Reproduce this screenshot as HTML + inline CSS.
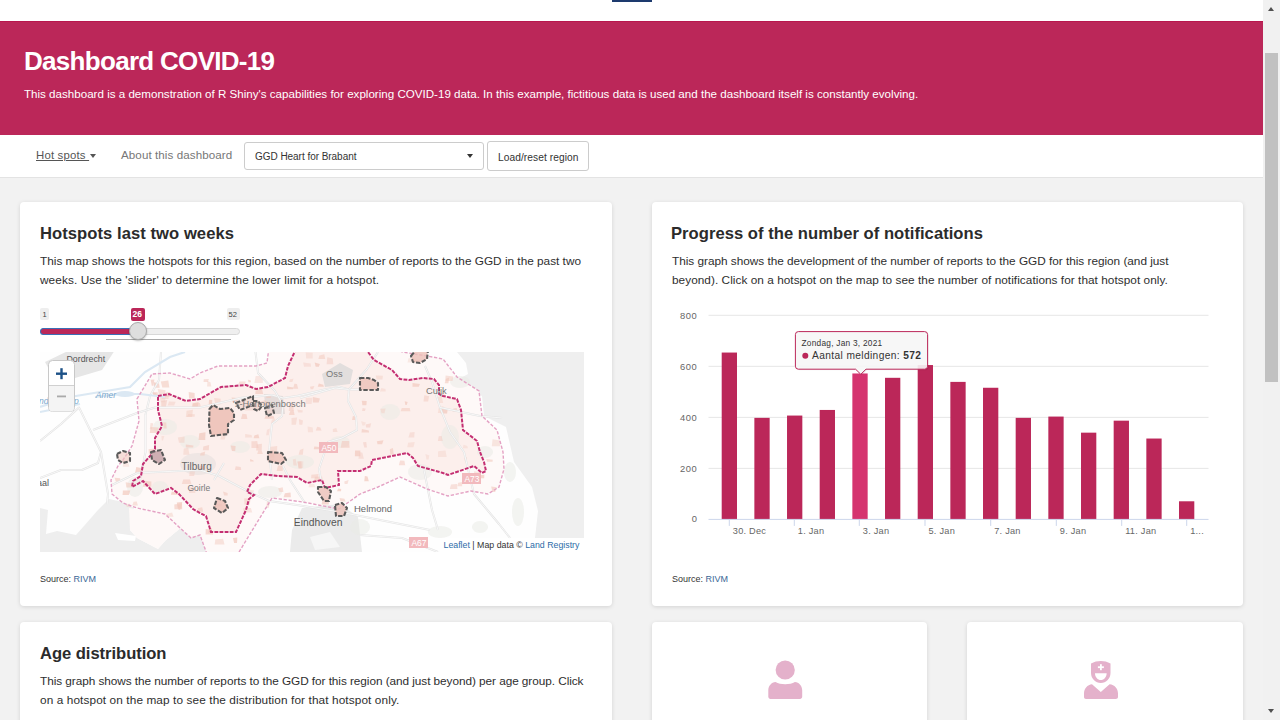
<!DOCTYPE html>
<html><head><meta charset="utf-8">
<style>
*{box-sizing:border-box;margin:0;padding:0}
html,body{width:1280px;height:720px;overflow:hidden}
body{background:#f2f2f2;font-family:"Liberation Sans",sans-serif;position:relative;color:#333}
.abs{position:absolute}
.t{position:absolute;white-space:nowrap;line-height:1}
#topstrip{left:0;top:0;width:1263px;height:21px;background:#fff}
#topbar{left:612px;top:0;width:40px;height:2px;background:#1d3a6e}
#banner{left:0;top:21px;width:1263px;height:114px;background:#bb2759;border-top:1px solid #b8164d}
#nav{left:0;top:135px;width:1263px;height:43px;background:#fff;border-bottom:1px solid #e3e3e3}
.card{position:absolute;background:#fff;border-radius:4px;box-shadow:0 1px 4px rgba(0,0,0,0.13)}
.h2{font-size:16.6px;margin-top:1.5px;font-weight:bold;color:#2b2b2b}
.desc{font-size:11.8px;color:#2e2e2e;margin-top:0.9px}
.src{font-size:9px;color:#333;margin-top:1.3px}
.src span{color:#3a6796}
#scroll{left:1263px;top:0;width:17px;height:720px;background:#f1f1f1}
#thumb{left:1265px;top:53px;width:13px;height:329px;background:#c1c1c1}
</style></head><body>
<div id="topstrip" class="abs"></div>
<div id="topbar" class="abs"></div>
<div id="banner" class="abs"></div>
<div id="title" class="t" style="left:24px;top:48px;font-size:26px;font-weight:bold;color:#fff;letter-spacing:-0.7px">Dashboard COVID-19</div>
<div id="sub" class="t" style="left:24px;top:88px;font-size:11.6px;color:#fff">This dashboard is a demonstration of R Shiny's capabilities for exploring COVID-19 data. In this example, fictitious data is used and the dashboard itself is constantly evolving.</div>

<div id="nav" class="abs"></div>
<div id="hot" class="t" style="left:36px;top:149.9px;font-size:11.4px;letter-spacing:0.18px;color:#555;text-decoration:underline">Hot spots&nbsp;</div>
<div class="abs" style="left:89.8px;top:153.7px;width:0;height:0;border-left:3.7px solid transparent;border-right:3.7px solid transparent;border-top:4.2px solid #555"></div>
<div id="about" class="t" style="left:121px;top:148.5px;font-size:11.6px;color:#777;letter-spacing:0.084px">About this dashboard</div>
<div class="abs" style="left:244px;top:142px;width:240px;height:28px;border:1px solid #ccc;border-radius:3px;background:#fff"></div>
<div id="sel" class="t" style="left:255px;top:152px;font-size:10px;color:#333;letter-spacing:-0.04px">GGD Heart for Brabant</div>
<div class="abs" style="left:467px;top:154.3px;width:0;height:0;border-left:3.7px solid transparent;border-right:3.7px solid transparent;border-top:4px solid #333"></div>
<div class="abs" style="left:487px;top:141px;width:102px;height:30px;border:1px solid #ccc;border-radius:3px;background:#fff"></div>
<div id="btn" class="t" style="left:498px;top:153px;font-size:10.2px;color:#333;letter-spacing:0.075px">Load/reset region</div>

<!-- cards -->
<div class="card" style="left:20px;top:202px;width:592px;height:404px"></div>
<div class="card" style="left:652px;top:202px;width:591px;height:404px"></div>
<div class="card" style="left:20px;top:622px;width:592px;height:200px"></div>
<div class="card" style="left:652px;top:622px;width:275px;height:200px"></div>
<div class="card" style="left:967px;top:622px;width:276px;height:200px"></div>

<div id="h2a" class="t h2" style="left:40px;top:224px;letter-spacing:0.055px">Hotspots last two weeks</div>
<div id="d1" class="t desc" style="left:40px;top:255px">This map shows the hotspots for this region, based on the number of reports to the GGD in the past two</div>
<div id="d2" class="t desc" style="left:40px;top:274px;letter-spacing:0.092px">weeks. Use the 'slider' to determine the lower limit for a hotspot.</div>
<div class="t src" style="left:40px;top:574px">Source: <span>RIVM</span></div>

<div id="h2b" class="t h2" style="left:671px;top:224px;letter-spacing:0.032px">Progress of the number of notifications</div>
<div id="d3" class="t desc" style="left:672px;top:255px;letter-spacing:-0.02px">This graph shows the development of the number of reports to the GGD for this region (and just</div>
<div id="d4" class="t desc" style="left:672px;top:274px;letter-spacing:0.044px">beyond). Click on a hotspot on the map to see the number of notifications for that hotspot only.</div>
<div class="t src" style="left:672px;top:574px">Source: <span>RIVM</span></div>

<div id="h2c" class="t h2" style="left:40px;top:644px;letter-spacing:-0.047px">Age distribution</div>
<div id="d5" class="t desc" style="left:40px;top:675px;letter-spacing:-0.058px">This graph shows the number of reports to the GGD for this region (and just beyond) per age group. Click</div>
<div id="d6" class="t desc" style="left:40px;top:694px;letter-spacing:0.107px">on a hotspot on the map to see the distribution for that hotspot only.</div>

<!--SLIDER-->
<div class="abs" style="left:40px;top:308px;width:9px;height:12px;background:#eee;border-radius:2px"></div>
<div class="t" style="left:42.5px;top:310.5px;font-size:7.5px;color:#444">1</div>
<div class="abs" style="left:131px;top:308px;width:14px;height:13px;background:#bb2759;border-radius:2px"></div>
<div class="t" style="left:132.5px;top:310px;font-size:8.5px;color:#fff;font-weight:bold">26</div>
<div class="abs" style="left:227px;top:308px;width:13px;height:12px;background:#eee;border-radius:2px"></div>
<div class="t" style="left:228.5px;top:310.5px;font-size:7.5px;color:#444">52</div>
<div class="abs" style="left:40px;top:328px;width:200px;height:7px;background:#efefef;border:1px solid #d8d8d8;border-radius:4px"></div>
<div class="abs" style="left:40px;top:328px;width:99px;height:7px;background:#bb2759;border:1px solid #3b6fb6;border-right:none;border-radius:4px 0 0 4px"></div>
<div class="abs" style="left:106px;top:339px;width:125px;height:1px;background:#aaa"></div>
<div class="abs" style="left:129px;top:321.8px;width:18px;height:18px;background:#dedede;border:1px solid #aaa;border-radius:50%;box-shadow:0 1px 2px rgba(0,0,0,0.25)"></div>

<!--MAP-->
<svg class="abs" style="left:40px;top:352px" width="544" height="200" viewBox="0 0 544 200">
<rect width="544" height="200" fill="#fefefe"/>
<path d="M417,0 L426,11 L428,22 L417,28 L420,33 L442,44 L444,64 L466,75 L474,110 L492,135 L498,159 L495,186 L544,186 L544,0 Z" fill="#efefef"/>
<path d="M0,156 L8,158 L6,182 L17,179 L36,183 L44,174 L58,158 L69,147 L83,150 L94,156 L90,178 L97,186 L118,197 L125,189 L143,174 L143,161 L160,161 L166,164 L171,180 L168,200 L0,200 Z" fill="#eeeeee"/>
<path d="M75,181 L96,184 L95,189 L78,188 Z" fill="#fff"/>
<polygon points="97,47 112,22 130,21 150,27 160,21 178,14 216,14 227,11 229,-5 362,-5 362,0 387,4 403,7 417,25 439,39 442,64 457,78 463,100 464,117 459,135 448,142 431,139 408,144 387,137 360,125 338,135 320,142 299,157 263,150 232,146 196,205 168,205 160,183 151,186 139,175 125,162 97,156 83,151 72,142 71,128 78,114 83,108 92,94 99,69" fill="#fef9f8"/>
<path d="M89,156 L144,164 L143,174 L125,189 L118,197 L97,186 L90,178 Z" fill="#fef9f8"/>
<polygon points="118,44 129,42 146,49 160,47 181,35 206,33 216,37 228,35 245,26 248,14 257,-5 328,-5 328,0 334,8 352,18 360,27 369,28 383,26 394,27 399,33 399,42 403,44 417,47 421,58 423,78 437,89 440,100 444,110 446,119 442,121 434,114 408,123 403,121 378,114 373,106 367,101 332,108 331,114 320,119 298,119 299,133 285,136 282,128 267,131 257,125 238,124 221,122 210,133 207,140 214,143 209,147 206,158 196,180 171,180 166,164 160,161 153,157 139,142 131,136 115,142 103,129 92,135 93,129 101,124 103,112 111,103 115,97 115,86 122,74 118,58" fill="#fcefec"/>
<path d="M5,10 L30,-2 L75,-2 L62,18 L35,26 L15,28 Z" fill="#e6e6e6"/>
<path d="M282,22 L300,11 L313,18 L310,32 L285,35 Z" fill="#e2dedd"/>
<path d="M262,156 L300,152 L318,165 L322,200 L250,200 L252,178 Z" fill="#ebebeb"/><path d="M270,185 L290,180 L300,195 L275,198 Z" fill="#f6f6f6"/>
<path d="M224,42 L243,44 L245,62 L226,62 Z" fill="#e6dddb"/>
<ellipse cx="158" cy="112" rx="18" ry="11" fill="#efe6e4"/>
<ellipse cx="125" cy="75" rx="12" ry="8" fill="#e9ebe6" fill-opacity="0.55"/>
<ellipse cx="150" cy="90" rx="10" ry="7" fill="#e9ebe6" fill-opacity="0.55"/>
<ellipse cx="95" cy="135" rx="8" ry="10" fill="#e9ebe6" fill-opacity="0.55"/>
<ellipse cx="260" cy="110" rx="14" ry="7" fill="#e9ebe6" fill-opacity="0.55"/>
<ellipse cx="350" cy="60" rx="10" ry="8" fill="#e9ebe6" fill-opacity="0.55"/>
<ellipse cx="380" cy="120" rx="12" ry="8" fill="#e9ebe6" fill-opacity="0.55"/>
<ellipse cx="410" cy="85" rx="9" ry="12" fill="#e9ebe6" fill-opacity="0.55"/>
<ellipse cx="440" cy="175" rx="8" ry="6" fill="#e9ebe6" fill-opacity="0.55"/>
<ellipse cx="478" cy="160" rx="6" ry="14" fill="#e9ebe6" fill-opacity="0.55"/>
<ellipse cx="470" cy="120" rx="6" ry="10" fill="#e9ebe6" fill-opacity="0.55"/>
<ellipse cx="445" cy="100" rx="8" ry="6" fill="#e9ebe6" fill-opacity="0.55"/>
<ellipse cx="420" cy="30" rx="10" ry="6" fill="#e9ebe6" fill-opacity="0.55"/>
<ellipse cx="230" cy="140" rx="12" ry="6" fill="#e9ebe6" fill-opacity="0.55"/>
<ellipse cx="320" cy="175" rx="10" ry="8" fill="#e9ebe6" fill-opacity="0.55"/>
<ellipse cx="120" cy="135" rx="8" ry="6" fill="#e9ebe6" fill-opacity="0.55"/>
<ellipse cx="400" cy="180" rx="12" ry="6" fill="#e9ebe6" fill-opacity="0.55"/>
<ellipse cx="200" cy="95" rx="10" ry="6" fill="#e9ebe6" fill-opacity="0.55"/>
<ellipse cx="300" cy="90" rx="10" ry="6" fill="#e9ebe6" fill-opacity="0.55"/>
<polygon points="199.5,29.4 205.6,29.5 205.2,32.2 198.2,32.2" fill="#f2cabf" fill-opacity="0.55"/>
<polygon points="119.5,43.5 125.5,43.8 125.2,50.3 120.9,50.3" fill="#f2cabf" fill-opacity="0.37"/>
<polygon points="413.4,56.5 416.7,55.9 417.6,59.5 412.4,59.5" fill="#f2cabf" fill-opacity="0.58"/>
<polygon points="325.6,72.6 331.1,71.3 330.2,75.4 326.1,75.4" fill="#f2cabf" fill-opacity="0.52"/>
<polygon points="195.7,114.2 200.7,115.1 201.2,118.0 194.9,118.0" fill="#f2cabf" fill-opacity="0.58"/>
<polygon points="361.8,56.1 369.7,55.9 370.4,59.2 360.7,59.2" fill="#f2cabf" fill-opacity="0.55"/>
<polygon points="85.7,130.3 92.4,131.4 91.8,135.4 86.3,135.4" fill="#f2cabf" fill-opacity="0.59"/>
<polygon points="302.0,89.0 309.1,88.9 309.6,95.7 300.6,95.7" fill="#f2cabf" fill-opacity="0.63"/>
<polygon points="398.8,55.5 403.4,54.1 403.3,61.0 397.8,61.0" fill="#f2cabf" fill-opacity="0.40"/>
<polygon points="93.6,149.8 96.8,149.5 97.9,153.4 92.3,153.4" fill="#f2cabf" fill-opacity="0.53"/>
<polygon points="181.4,81.0 185.8,82.4 184.8,87.5 180.4,87.5" fill="#f2cabf" fill-opacity="0.44"/>
<polygon points="163.3,94.6 169.1,93.1 168.8,98.3 162.9,98.3" fill="#f2cabf" fill-opacity="0.58"/>
<polygon points="451.2,134.6 456.6,135.2 455.2,139.9 452.4,139.9" fill="#f2cabf" fill-opacity="0.66"/>
<polygon points="227.0,77.8 230.0,76.5 228.7,83.2 226.1,83.2" fill="#f2cabf" fill-opacity="0.41"/>
<polygon points="110.6,70.9 113.2,71.2 112.2,77.3 109.8,77.3" fill="#f2cabf" fill-opacity="0.49"/>
<polygon points="215.7,24.0 222.8,23.9 222.8,30.9 214.4,30.9" fill="#f2cabf" fill-opacity="0.39"/>
<polygon points="207.1,51.6 214.1,50.2 215.5,54.9 207.1,54.9" fill="#f2cabf" fill-opacity="0.41"/>
<polygon points="287.3,5.3 292.7,6.4 293.3,12.2 286.6,12.2" fill="#f2cabf" fill-opacity="0.50"/>
<polygon points="136.8,150.5 142.2,150.0 141.4,156.5 137.8,156.5" fill="#f2cabf" fill-opacity="0.74"/>
<polygon points="160.7,100.9 165.2,99.5 164.5,103.6 160.0,103.6" fill="#f2cabf" fill-opacity="0.63"/>
<polygon points="452.6,87.2 460.3,88.6 459.9,94.2 451.8,94.2" fill="#f2cabf" fill-opacity="0.44"/>
<polygon points="148.7,39.9 154.6,40.9 154.6,46.4 149.1,46.4" fill="#f2cabf" fill-opacity="0.67"/>
<polygon points="103.9,128.8 111.4,129.6 111.3,134.8 102.9,134.8" fill="#f2cabf" fill-opacity="0.67"/>
<polygon points="203.0,156.2 210.9,155.9 212.2,160.4 203.7,160.4" fill="#f2cabf" fill-opacity="0.42"/>
<polygon points="120.8,29.5 128.3,28.4 129.3,35.6 122.3,35.6" fill="#f2cabf" fill-opacity="0.61"/>
<polygon points="210.2,107.0 213.4,108.4 213.8,109.6 210.2,109.6" fill="#f2cabf" fill-opacity="0.72"/>
<polygon points="400.5,41.2 404.3,40.4 404.6,45.0 399.7,45.0" fill="#f2cabf" fill-opacity="0.52"/>
<polygon points="211.5,89.3 217.2,89.1 218.5,95.9 211.5,95.9" fill="#f2cabf" fill-opacity="0.56"/>
<polygon points="279.4,3.6 284.3,2.2 285.2,7.0 278.4,7.0" fill="#f2cabf" fill-opacity="0.54"/>
<polygon points="360.1,108.5 364.4,108.7 365.2,113.3 358.9,113.3" fill="#f2cabf" fill-opacity="0.57"/>
<polygon points="169.4,54.0 176.1,54.2 176.9,58.8 170.6,58.8" fill="#f2cabf" fill-opacity="0.53"/>
<polygon points="315.0,98.6 320.3,98.4 320.4,104.2 314.9,104.2" fill="#f2cabf" fill-opacity="0.73"/>
<polygon points="406.0,26.7 409.2,25.5 408.4,31.2 404.7,31.2" fill="#f2cabf" fill-opacity="0.62"/>
<polygon points="131.8,139.6 137.9,140.8 139.3,142.8 130.9,142.8" fill="#f2cabf" fill-opacity="0.73"/>
<polygon points="229.3,95.0 237.2,94.0 237.0,101.3 229.3,101.3" fill="#f2cabf" fill-opacity="0.49"/>
<polygon points="148.3,62.1 154.8,62.3 154.6,64.7 146.9,64.7" fill="#f2cabf" fill-opacity="0.48"/>
<polygon points="319.6,99.9 322.4,100.8 323.8,106.8 318.4,106.8" fill="#f2cabf" fill-opacity="0.46"/>
<polygon points="85.8,151.9 89.8,151.7 91.1,155.0 86.8,155.0" fill="#f2cabf" fill-opacity="0.45"/>
<polygon points="298.2,136.6 301.2,137.1 301.0,139.3 297.0,139.3" fill="#f2cabf" fill-opacity="0.73"/>
<polygon points="251.5,66.1 257.1,65.4 255.9,72.8 251.6,72.8" fill="#f2cabf" fill-opacity="0.45"/>
<polygon points="113.8,31.5 116.6,30.9 116.0,34.9 114.6,34.9" fill="#f2cabf" fill-opacity="0.47"/>
<polygon points="270.0,34.7 274.4,33.9 273.0,37.3 270.7,37.3" fill="#f2cabf" fill-opacity="0.57"/>
<polygon points="145.8,92.6 153.4,93.5 153.2,95.6 145.8,95.6" fill="#f2cabf" fill-opacity="0.68"/>
<polygon points="227.2,98.8 233.5,98.3 234.5,105.7 227.9,105.7" fill="#f2cabf" fill-opacity="0.60"/>
<polygon points="231.9,67.8 234.7,66.5 235.4,70.9 231.1,70.9" fill="#f2cabf" fill-opacity="0.42"/>
<polygon points="418.2,130.8 422.3,130.1 422.1,134.3 417.2,134.3" fill="#f2cabf" fill-opacity="0.53"/>
<polygon points="175.3,187.5 183.1,186.8 184.5,192.5 174.7,192.5" fill="#f2cabf" fill-opacity="0.49"/>
<polygon points="259.9,98.0 263.5,96.6 262.8,102.8 258.6,102.8" fill="#f2cabf" fill-opacity="0.51"/>
<polygon points="191.7,45.4 197.4,46.1 197.9,50.3 192.3,50.3" fill="#f2cabf" fill-opacity="0.70"/>
<polygon points="225.8,63.6 233.7,64.3 234.2,66.8 224.4,66.8" fill="#f2cabf" fill-opacity="0.68"/>
<polygon points="426.8,122.3 433.3,121.2 433.4,128.5 426.8,128.5" fill="#f2cabf" fill-opacity="0.68"/>
<polygon points="123.2,70.3 126.3,70.5 126.7,76.6 123.6,76.6" fill="#f2cabf" fill-opacity="0.62"/>
<polygon points="265.7,0.6 272.6,0.7 272.7,6.5 266.2,6.5" fill="#f2cabf" fill-opacity="0.38"/>
<polygon points="364.7,49.2 367.6,49.9 366.7,52.9 365.4,52.9" fill="#f2cabf" fill-opacity="0.74"/>
<polygon points="267.6,74.6 272.7,75.4 273.1,80.2 268.0,80.2" fill="#f2cabf" fill-opacity="0.38"/>
<polygon points="129.0,49.5 135.6,49.7 134.1,53.4 127.7,53.4" fill="#f2cabf" fill-opacity="0.46"/>
<polygon points="340.3,56.7 345.6,56.6 344.5,61.3 341.5,61.3" fill="#f2cabf" fill-opacity="0.43"/>
<polygon points="249.8,52.4 253.4,51.5 253.7,59.1 248.7,59.1" fill="#f2cabf" fill-opacity="0.56"/>
<polygon points="398.1,99.2 405.5,98.4 406.7,104.9 398.0,104.9" fill="#f2cabf" fill-opacity="0.36"/>
<polygon points="250.3,58.9 253.6,58.3 254.6,62.9 248.8,62.9" fill="#f2cabf" fill-opacity="0.65"/>
<polygon points="405.6,23.4 413.2,24.6 412.6,29.1 405.3,29.1" fill="#f2cabf" fill-opacity="0.51"/>
<polygon points="214.3,83.5 218.3,82.3 219.3,86.2 213.6,86.2" fill="#f2cabf" fill-opacity="0.72"/>
<polygon points="169.7,51.8 175.0,51.4 176.4,55.2 170.9,55.2" fill="#f2cabf" fill-opacity="0.67"/>
<polygon points="446.3,107.1 452.7,107.8 452.6,109.8 447.0,109.8" fill="#f2cabf" fill-opacity="0.61"/>
<polygon points="258.9,67.0 263.0,68.4 262.3,72.8 259.3,72.8" fill="#f2cabf" fill-opacity="0.47"/>
<polygon points="292.9,76.9 296.3,76.0 297.6,80.1 292.9,80.1" fill="#f2cabf" fill-opacity="0.44"/>
<polygon points="250.0,27.2 253.5,26.7 252.3,30.1 249.2,30.1" fill="#f2cabf" fill-opacity="0.45"/>
<polygon points="369.9,80.5 374.6,80.1 374.2,85.4 368.5,85.4" fill="#f2cabf" fill-opacity="0.46"/>
<polygon points="271.4,122.8 278.6,122.1 277.8,126.2 271.1,126.2" fill="#f2cabf" fill-opacity="0.53"/>
<polygon points="82.9,138.4 90.3,138.6 88.8,143.0 82.6,143.0" fill="#f2cabf" fill-opacity="0.72"/>
<polygon points="113.6,30.1 119.0,31.4 119.7,35.7 114.1,35.7" fill="#f2cabf" fill-opacity="0.66"/>
<polygon points="252.9,107.5 255.6,106.7 256.9,113.6 253.4,113.6" fill="#f2cabf" fill-opacity="0.47"/>
<polygon points="121.2,49.1 127.2,47.9 125.9,54.7 121.3,54.7" fill="#f2cabf" fill-opacity="0.58"/>
<polygon points="225.2,43.6 231.0,43.0 230.9,46.1 226.6,46.1" fill="#f2cabf" fill-opacity="0.61"/>
<polygon points="423.5,92.7 427.3,94.1 427.9,96.3 422.9,96.3" fill="#f2cabf" fill-opacity="0.36"/>
<polygon points="269.3,131.5 274.1,132.0 275.4,135.2 268.5,135.2" fill="#f2cabf" fill-opacity="0.36"/>
<polygon points="205.2,82.0 211.5,82.9 212.2,85.4 205.2,85.4" fill="#f2cabf" fill-opacity="0.43"/>
<polygon points="398.0,45.0 401.7,44.4 403.1,50.9 398.0,50.9" fill="#f2cabf" fill-opacity="0.42"/>
<polygon points="159.3,81.3 165.5,80.3 165.2,88.1 158.5,88.1" fill="#f2cabf" fill-opacity="0.74"/>
<polygon points="368.5,6.2 374.7,5.8 374.2,10.4 367.5,10.4" fill="#f2cabf" fill-opacity="0.35"/>
<polygon points="181.9,68.5 189.7,69.9 188.8,71.6 181.5,71.6" fill="#f2cabf" fill-opacity="0.68"/>
<polygon points="398.8,84.3 401.6,83.9 402.8,89.0 397.9,89.0" fill="#f2cabf" fill-opacity="0.50"/>
<polygon points="376.7,7.9 379.4,9.2 378.6,10.7 377.4,10.7" fill="#f2cabf" fill-opacity="0.71"/>
<polygon points="205.6,53.1 213.4,52.4 214.0,58.4 205.1,58.4" fill="#f2cabf" fill-opacity="0.46"/>
<polygon points="436.6,123.6 444.3,122.8 444.2,126.2 438.0,126.2" fill="#f2cabf" fill-opacity="0.73"/>
<polygon points="224.6,49.0 229.5,50.2 228.5,53.7 225.5,53.7" fill="#f2cabf" fill-opacity="0.65"/>
<polygon points="312.9,63.9 317.2,64.8 315.9,68.0 312.0,68.0" fill="#f2cabf" fill-opacity="0.65"/>
<polygon points="83.5,107.8 87.8,108.9 89.3,114.7 82.8,114.7" fill="#f2cabf" fill-opacity="0.38"/>
<polygon points="108.6,97.2 115.0,96.4 114.7,101.7 108.9,101.7" fill="#f2cabf" fill-opacity="0.62"/>
<polygon points="335.8,23.6 342.9,23.8 342.5,27.4 336.5,27.4" fill="#f2cabf" fill-opacity="0.43"/>
<polygon points="169.0,47.8 172.3,48.1 171.8,54.3 168.7,54.3" fill="#f2cabf" fill-opacity="0.75"/>
<polygon points="272.9,45.1 279.9,46.6 278.7,50.6 272.9,50.6" fill="#f2cabf" fill-opacity="0.68"/>
<polygon points="117.7,37.0 125.5,38.3 125.2,42.1 118.8,42.1" fill="#f2cabf" fill-opacity="0.53"/>
<polygon points="174.0,151.7 181.7,152.0 182.0,154.6 173.1,154.6" fill="#f2cabf" fill-opacity="0.50"/>
<polygon points="126.5,39.8 130.4,40.2 129.6,45.0 125.1,45.0" fill="#f2cabf" fill-opacity="0.48"/>
<polygon points="341.3,36.1 345.5,37.0 345.7,39.5 340.0,39.5" fill="#f2cabf" fill-opacity="0.39"/>
<polygon points="228.1,107.3 234.1,106.3 234.7,110.2 227.8,110.2" fill="#f2cabf" fill-opacity="0.46"/>
<polygon points="193.0,185.9 197.3,185.4 197.0,190.9 194.1,190.9" fill="#f2cabf" fill-opacity="0.75"/>
<polygon points="215.5,38.5 222.0,37.0 223.2,41.9 215.3,41.9" fill="#f2cabf" fill-opacity="0.68"/>
<polygon points="254.4,31.7 256.9,32.1 258.2,36.7 253.1,36.7" fill="#f2cabf" fill-opacity="0.60"/>
<polygon points="218.3,98.4 221.6,98.4 222.9,102.1 217.2,102.1" fill="#f2cabf" fill-opacity="0.55"/>
<polygon points="263.1,10.4 270.7,11.6 271.0,14.7 264.1,14.7" fill="#f2cabf" fill-opacity="0.41"/>
<polygon points="384.3,43.3 389.1,44.3 388.1,49.6 383.5,49.6" fill="#f2cabf" fill-opacity="0.51"/>
<polygon points="277.2,74.8 280.3,75.5 281.5,78.4 275.8,78.4" fill="#f2cabf" fill-opacity="0.57"/>
<polygon points="373.0,7.4 380.1,7.7 380.2,10.5 373.4,10.5" fill="#f2cabf" fill-opacity="0.47"/>
<polygon points="238.0,113.6 242.9,113.5 242.7,119.1 236.6,119.1" fill="#f2cabf" fill-opacity="0.60"/>
<polygon points="265.8,45.9 272.5,45.7 271.5,51.9 265.7,51.9" fill="#f2cabf" fill-opacity="0.39"/>
<polygon points="121.4,84.0 124.4,84.0 123.0,88.5 121.8,88.5" fill="#f2cabf" fill-opacity="0.38"/>
<polygon points="274.6,10.6 279.9,11.9 278.8,14.8 275.7,14.8" fill="#f2cabf" fill-opacity="0.75"/>
<polygon points="372.5,31.0 379.9,31.9 378.8,34.7 372.5,34.7" fill="#f2cabf" fill-opacity="0.72"/>
<polygon points="153.3,51.3 158.6,49.9 157.7,55.2 152.3,55.2" fill="#f2cabf" fill-opacity="0.72"/>
<polygon points="137.5,153.0 140.6,153.5 140.2,157.9 138.6,157.9" fill="#f2cabf" fill-opacity="0.57"/>
<polygon points="321.9,76.9 328.8,78.4 329.0,80.6 321.5,80.6" fill="#f2cabf" fill-opacity="0.66"/>
<polygon points="246.9,34.5 253.5,35.4 252.8,37.2 247.3,37.2" fill="#f2cabf" fill-opacity="0.74"/>
<polygon points="304.3,129.4 308.6,128.0 307.5,131.9 304.7,131.9" fill="#f2cabf" fill-opacity="0.52"/>
<polygon points="122.8,44.3 128.9,42.8 128.5,46.9 121.6,46.9" fill="#f2cabf" fill-opacity="0.49"/>
<polygon points="159.7,113.8 165.4,114.2 165.4,117.2 158.6,117.2" fill="#f2cabf" fill-opacity="0.72"/>
<polygon points="167.4,29.1 170.5,30.2 171.3,34.5 167.1,34.5" fill="#f2cabf" fill-opacity="0.46"/>
<polygon points="74.6,125.8 80.2,126.2 80.0,129.8 75.9,129.8" fill="#f2cabf" fill-opacity="0.64"/>
<polygon points="169.4,176.2 172.1,175.9 171.4,181.1 168.1,181.1" fill="#f2cabf" fill-opacity="0.66"/>
<polygon points="149.8,118.6 155.1,119.5 154.1,124.0 149.2,124.0" fill="#f2cabf" fill-opacity="0.47"/>
<polygon points="368.1,90.7 374.7,89.9 373.5,95.3 367.3,95.3" fill="#f2cabf" fill-opacity="0.37"/>
<polygon points="204.2,146.2 210.5,146.8 209.8,152.5 204.4,152.5" fill="#f2cabf" fill-opacity="0.52"/>
<polygon points="385.4,102.0 389.3,103.4 388.5,107.4 386.5,107.4" fill="#f2cabf" fill-opacity="0.36"/>
<polygon points="174.1,46.0 180.7,46.8 180.2,52.8 175.3,52.8" fill="#f2cabf" fill-opacity="0.48"/>
<polygon points="165.7,177.0 171.6,177.5 173.1,182.6 165.6,182.6" fill="#f2cabf" fill-opacity="0.69"/>
<polygon points="244.9,141.3 250.5,140.4 250.9,145.2 243.6,145.2" fill="#f2cabf" fill-opacity="0.71"/>
<polygon points="207.9,27.7 210.6,28.2 211.0,30.3 208.5,30.3" fill="#f2cabf" fill-opacity="0.64"/>
<polygon points="96.3,115.1 100.8,116.1 102.0,121.3 95.0,121.3" fill="#f2cabf" fill-opacity="0.70"/>
<polygon points="112.8,40.1 116.0,41.2 116.9,42.8 113.2,42.8" fill="#f2cabf" fill-opacity="0.68"/>
<polygon points="322.6,56.0 325.7,56.8 324.8,59.0 322.1,59.0" fill="#f2cabf" fill-opacity="0.52"/>
<polygon points="183.0,139.6 187.6,141.0 187.6,143.5 184.1,143.5" fill="#f2cabf" fill-opacity="0.60"/>
<polygon points="208.7,137.4 214.2,138.5 212.9,140.9 209.7,140.9" fill="#f2cabf" fill-opacity="0.42"/>
<polygon points="143.8,96.4 148.2,95.7 149.5,102.7 143.2,102.7" fill="#f2cabf" fill-opacity="0.44"/>
<polygon points="349.8,97.2 352.9,95.9 353.8,102.5 350.4,102.5" fill="#f2cabf" fill-opacity="0.66"/>
<polygon points="321.2,69.3 325.9,70.5 324.6,73.6 322.3,73.6" fill="#f2cabf" fill-opacity="0.36"/>
<polygon points="152.4,51.3 159.9,51.0 161.1,56.1 151.6,56.1" fill="#f2cabf" fill-opacity="0.53"/>
<polygon points="282.6,147.1 289.3,146.7 288.7,152.5 281.6,152.5" fill="#f2cabf" fill-opacity="0.69"/>
<polygon points="137.8,85.6 144.6,84.4 144.5,90.7 139.0,90.7" fill="#f2cabf" fill-opacity="0.45"/>
<polygon points="146.6,58.8 153.0,57.8 152.0,65.1 145.9,65.1" fill="#f2cabf" fill-opacity="0.48"/>
<polygon points="278.9,31.4 283.2,32.8 283.9,34.7 277.7,34.7" fill="#f2cabf" fill-opacity="0.73"/>
<polygon points="110.7,74.9 118.6,75.6 118.4,81.0 109.7,81.0" fill="#f2cabf" fill-opacity="0.61"/>
<polygon points="112.7,40.3 117.4,40.0 118.3,42.9 113.3,42.9" fill="#f2cabf" fill-opacity="0.55"/>
<polygon points="323.0,90.3 326.2,90.1 327.0,95.6 324.2,95.6" fill="#f2cabf" fill-opacity="0.52"/>
<polygon points="299.6,146.1 304.4,146.7 305.5,149.6 300.4,149.6" fill="#f2cabf" fill-opacity="0.63"/>
<polygon points="411.0,132.5 417.0,132.0 417.4,137.1 409.8,137.1" fill="#f2cabf" fill-opacity="0.52"/>
<polygon points="321.8,48.8 326.7,49.1 326.4,53.3 322.4,53.3" fill="#f2cabf" fill-opacity="0.72"/>
<polygon points="143.2,127.6 150.0,127.6 151.4,131.9 141.8,131.9" fill="#f2cabf" fill-opacity="0.57"/>
<polygon points="134.3,152.4 142.0,151.3 142.2,157.3 134.5,157.3" fill="#f2cabf" fill-opacity="0.64"/>
<polygon points="274.9,124.7 281.9,124.4 283.3,129.5 274.0,129.5" fill="#f2cabf" fill-opacity="0.62"/>
<polygon points="227.0,148.7 230.2,148.3 228.8,155.7 226.3,155.7" fill="#f2cabf" fill-opacity="0.51"/>
<polygon points="238.2,136.2 242.7,135.3 243.4,139.9 239.5,139.9" fill="#f2cabf" fill-opacity="0.56"/>
<polygon points="157.6,156.3 162.2,155.2 163.1,159.7 158.5,159.7" fill="#f2cabf" fill-opacity="0.60"/>
<polygon points="257.7,109.6 261.4,109.2 261.8,116.4 258.6,116.4" fill="#f2cabf" fill-opacity="0.68"/>
<polygon points="257.2,57.4 262.8,58.4 262.3,60.5 258.3,60.5" fill="#f2cabf" fill-opacity="0.46"/>
<polygon points="220.5,49.4 225.3,48.0 226.0,52.8 219.8,52.8" fill="#f2cabf" fill-opacity="0.45"/>
<polygon points="190.7,93.5 195.6,94.0 195.2,98.9 192.0,98.9" fill="#f2cabf" fill-opacity="0.69"/>
<polygon points="126.2,162.1 132.1,160.6 133.5,164.7 126.6,164.7" fill="#f2cabf" fill-opacity="0.45"/>
<polygon points="110.6,27.8 114.4,27.4 113.3,33.8 111.8,33.8" fill="#f2cabf" fill-opacity="0.67"/>
<polygon points="148.9,135.1 154.4,134.9 155.5,140.9 149.1,140.9" fill="#f2cabf" fill-opacity="0.46"/>
<polygon points="163.7,27.2 168.9,27.1 167.8,29.9 163.6,29.9" fill="#f2cabf" fill-opacity="0.55"/>
<polygon points="257.2,109.7 263.3,109.3 263.1,116.0 258.6,116.0" fill="#f2cabf" fill-opacity="0.38"/>
<polygon points="324.8,124.0 327.5,124.6 328.8,129.3 324.3,129.3" fill="#f2cabf" fill-opacity="0.74"/>
<polygon points="274.3,94.5 281.7,95.2 282.1,97.2 273.8,97.2" fill="#f2cabf" fill-opacity="0.69"/>
<polygon points="216.5,92.5 221.9,91.7 221.7,98.5 216.2,98.5" fill="#f2cabf" fill-opacity="0.57"/>
<polygon points="400.7,57.1 407.7,57.1 407.1,61.4 400.7,61.4" fill="#f2cabf" fill-opacity="0.74"/>
<polygon points="202.4,61.8 206.5,62.2 207.4,67.0 201.0,67.0" fill="#f2cabf" fill-opacity="0.64"/>
<polygon points="424.2,106.4 427.0,104.9 426.1,110.2 425.5,110.2" fill="#f2cabf" fill-opacity="0.59"/>
<polygon points="433.9,119.3 439.8,119.9 440.1,124.6 434.5,124.6" fill="#f2cabf" fill-opacity="0.44"/>
<polygon points="336.8,89.3 343.5,88.3 342.1,92.2 337.6,92.2" fill="#f2cabf" fill-opacity="0.72"/>
<path d="M121,0 L119,28 L110,44 L105.5,62.5 L105.5,100 L100,128" fill="none" stroke="#e3e3e3" stroke-width="2" stroke-linejoin="round"/>
<path d="M121,0 L119,28 L110,44 L105.5,62.5 L105.5,100 L100,128" fill="none" stroke="#fdfdfd" stroke-width="0.8" stroke-linejoin="round"/>
<path d="M0,89 L21,72 L39,55.5 L61,100 L58,111 L42,118 L21,118 L0,126" fill="none" stroke="#e3e3e3" stroke-width="2" stroke-linejoin="round"/>
<path d="M0,89 L21,72 L39,55.5 L61,100 L58,111 L42,118 L21,118 L0,126" fill="none" stroke="#fdfdfd" stroke-width="0.8" stroke-linejoin="round"/>
<path d="M61,100 L68,142 L67,153" fill="none" stroke="#e3e3e3" stroke-width="2" stroke-linejoin="round"/>
<path d="M61,100 L68,142 L67,153" fill="none" stroke="#fdfdfd" stroke-width="0.8" stroke-linejoin="round"/>
<path d="M53,78 L97,61 L115,55.5 L160,55.5 L201.7,45.8 L232,43 L243,46 L257,44 L285,37.5 L299,34.7 L309,37.5 L320,37.5" fill="none" stroke="#e3e3e3" stroke-width="2" stroke-linejoin="round"/>
<path d="M53,78 L97,61 L115,55.5 L160,55.5 L201.7,45.8 L232,43 L243,46 L257,44 L285,37.5 L299,34.7 L309,37.5 L320,37.5" fill="none" stroke="#fdfdfd" stroke-width="0.8" stroke-linejoin="round"/>
<path d="M215.5,0 L218,21 L235,39 L243,53 L242,64 L232,72 L229,100 L232,128" fill="none" stroke="#e3e3e3" stroke-width="2" stroke-linejoin="round"/>
<path d="M215.5,0 L218,21 L235,39 L243,53 L242,64 L232,72 L229,100 L232,128" fill="none" stroke="#fdfdfd" stroke-width="0.8" stroke-linejoin="round"/>
<path d="M260,46 L295,36 L309,37.5 L327,17 L338,0" fill="none" stroke="#e3e3e3" stroke-width="2" stroke-linejoin="round"/>
<path d="M260,46 L295,36 L309,37.5 L327,17 L338,0" fill="none" stroke="#fdfdfd" stroke-width="0.8" stroke-linejoin="round"/>
<path d="M309,37.5 L308,49 L316,65 L317,78 L302,86 L288,90 L279,117 L282,133" fill="none" stroke="#e3e3e3" stroke-width="2" stroke-linejoin="round"/>
<path d="M309,37.5 L308,49 L316,65 L317,78 L302,86 L288,90 L279,117 L282,133" fill="none" stroke="#fdfdfd" stroke-width="0.8" stroke-linejoin="round"/>
<path d="M385,14 L392,30 L400,55.5 L410,80 L424,100 L434,142 L459,172 L470,186" fill="none" stroke="#e3e3e3" stroke-width="2" stroke-linejoin="round"/>
<path d="M385,14 L392,30 L400,55.5 L410,80 L424,100 L434,142 L459,172 L470,186" fill="none" stroke="#fdfdfd" stroke-width="0.8" stroke-linejoin="round"/>
<path d="M72,133 L97,121 L160,118 L179,124 L209,140 L229,149 L257,153" fill="none" stroke="#e3e3e3" stroke-width="2" stroke-linejoin="round"/>
<path d="M72,133 L97,121 L160,118 L179,124 L209,140 L229,149 L257,153" fill="none" stroke="#fdfdfd" stroke-width="0.8" stroke-linejoin="round"/>
<path d="M184,111 L174,128" fill="none" stroke="#e3e3e3" stroke-width="2" stroke-linejoin="round"/>
<path d="M184,111 L174,128" fill="none" stroke="#fdfdfd" stroke-width="0.8" stroke-linejoin="round"/>
<path d="M243,114 L250,128 L265,151" fill="none" stroke="#e3e3e3" stroke-width="2" stroke-linejoin="round"/>
<path d="M243,114 L250,128 L265,151" fill="none" stroke="#fdfdfd" stroke-width="0.8" stroke-linejoin="round"/>
<path d="M320,183 L362,186 L398,200" fill="none" stroke="#e3e3e3" stroke-width="2" stroke-linejoin="round"/>
<path d="M320,183 L362,186 L398,200" fill="none" stroke="#fdfdfd" stroke-width="0.8" stroke-linejoin="round"/>
<path d="M384,118 L392,158 L398,178" fill="none" stroke="#e3e3e3" stroke-width="2" stroke-linejoin="round"/>
<path d="M384,118 L392,158 L398,178" fill="none" stroke="#fdfdfd" stroke-width="0.8" stroke-linejoin="round"/>
<path d="M257,153 L300,160 L340,168 L390,178" fill="none" stroke="#e3e3e3" stroke-width="2" stroke-linejoin="round"/>
<path d="M257,153 L300,160 L340,168 L390,178" fill="none" stroke="#fdfdfd" stroke-width="0.8" stroke-linejoin="round"/>
<path d="M400,55.5 L440,64 L462,66" fill="none" stroke="#e3e3e3" stroke-width="2" stroke-linejoin="round"/>
<path d="M400,55.5 L440,64 L462,66" fill="none" stroke="#fdfdfd" stroke-width="0.8" stroke-linejoin="round"/>
<path d="M0,55 L30,45 L60,40 L90,35 L105,20 L130,5 L145,0" fill="none" stroke="#dbe8f3" stroke-width="2.2"/>
<path d="M55,45 L80,42 L100,42 L125,45" fill="none" stroke="#dbe8f3" stroke-width="2.2"/>
<path d="M0,60 L40,52" fill="none" stroke="#dbe8f3" stroke-width="2.2"/>
<ellipse cx="85" cy="42" rx="10" ry="3" fill="#dbe8f3"/>
<polygon points="97,47 112,22 130,21 150,27 160,21 178,14 216,14 227,11 229,-5 362,-5 362,0 387,4 403,7 417,25 439,39 442,64 457,78 463,100 464,117 459,135 448,142 431,139 408,144 387,137 360,125 338,135 320,142 299,157 263,150 232,146 196,205 168,205 160,183 151,186 139,175 125,162 97,156 83,151 72,142 71,128 78,114 83,108 92,94 99,69" fill="none" stroke="#e4a2c4" stroke-width="1.4" stroke-dasharray="3.3,1.7"/>
<polygon points="118,44 129,42 146,49 160,47 181,35 206,33 216,37 228,35 245,26 248,14 257,-5 328,-5 328,0 334,8 352,18 360,27 369,28 383,26 394,27 399,33 399,42 403,44 417,47 421,58 423,78 437,89 440,100 444,110 446,119 442,121 434,114 408,123 403,121 378,114 373,106 367,101 332,108 331,114 320,119 298,119 299,133 285,136 282,128 267,131 257,125 238,124 221,122 210,133 207,140 214,143 209,147 206,158 196,180 171,180 166,164 160,161 153,157 139,142 131,136 115,142 103,129 92,135 93,129 101,124 103,112 111,103 115,97 115,86 122,74 118,58" fill="none" stroke="#c42f72" stroke-width="2" stroke-dasharray="3.8,1.3"/>
<polygon points="169.5,57 173,53 180,57 190,56 194,61 194,68 188,72 188,82 171,84 169,73" fill="#efc6bd" fill-opacity="1" stroke="#5a5a5a" stroke-width="2.1" stroke-dasharray="4.4,1.7" stroke-linejoin="round"/>
<polygon points="196,51 213,44 213,53 200,58" fill="#f0d0c8" fill-opacity="0.6" stroke="#5a5a5a" stroke-width="2.1" stroke-dasharray="4.4,1.7" stroke-linejoin="round"/>
<polygon points="213,49 218,49 222,54 218,59 214,57" fill="#f0c8c0" fill-opacity="0.6" stroke="#5a5a5a" stroke-width="2.1" stroke-dasharray="4.4,1.7" stroke-linejoin="round"/>
<polygon points="225,56 232,53 234,61 227,64" fill="#f0d0c8" fill-opacity="0.6" stroke="#5a5a5a" stroke-width="2.1" stroke-dasharray="4.4,1.7" stroke-linejoin="round"/>
<polygon points="77,102 83,99 90,101 90,109 83,111 78,108" fill="#f0c8c0" fill-opacity="0.6" stroke="#5a5a5a" stroke-width="2.1" stroke-dasharray="4.4,1.7" stroke-linejoin="round"/>
<polygon points="111,100 121,98 125,108 119,112 112,108" fill="#c9a7ad" fill-opacity="0.9" stroke="#5a5a5a" stroke-width="2.1" stroke-dasharray="4.4,1.7" stroke-linejoin="round"/>
<polygon points="228,100 242,101 246,108 241,112 228,109" fill="#ecc0b8" fill-opacity="0.8" stroke="#5a5a5a" stroke-width="2.1" stroke-dasharray="4.4,1.7" stroke-linejoin="round"/>
<polygon points="177,146 185,149 188,156 182,161 174,156" fill="#ecc0b8" fill-opacity="0.8" stroke="#5a5a5a" stroke-width="2.1" stroke-dasharray="4.4,1.7" stroke-linejoin="round"/>
<polygon points="278,135 286,135 291,139 289,149 284,149 278,140" fill="#ecc0b8" fill-opacity="0.8" stroke="#5a5a5a" stroke-width="2.1" stroke-dasharray="4.4,1.7" stroke-linejoin="round"/>
<polygon points="295,153 302,151 307,156 304,164 296,164" fill="#ecc0b8" fill-opacity="0.8" stroke="#5a5a5a" stroke-width="2.1" stroke-dasharray="4.4,1.7" stroke-linejoin="round"/>
<polygon points="320,26 328,26 334,28 338,31 338,38 320,38" fill="#ecc0b8" fill-opacity="0.8" stroke="#5a5a5a" stroke-width="2.1" stroke-dasharray="4.4,1.7" stroke-linejoin="round"/>
<polygon points="371,4 376,-2 388,-2 387,7 380,11 373,10" fill="#ecc0b8" fill-opacity="0.8" stroke="#5a5a5a" stroke-width="2.1" stroke-dasharray="4.4,1.7" stroke-linejoin="round"/>
<rect x="279" y="90" width="19" height="11" fill="#f2b9bd"/>
<text x="289" y="99" font-size="8.5" fill="#fff" text-anchor="middle" font-family="Liberation Sans">A50</text>
<rect x="422" y="121" width="19" height="11" fill="#f2b9bd"/>
<text x="432" y="130" font-size="8.5" fill="#fff" text-anchor="middle" font-family="Liberation Sans">A73</text>
<rect x="369" y="185" width="19" height="11" fill="#f2b9bd"/>
<text x="379" y="194" font-size="8.5" fill="#fff" text-anchor="middle" font-family="Liberation Sans">A67</text>
<text x="26.5" y="10.4" font-size="8.8" fill="#555" font-family="Liberation Sans" >Dordrecht</text>
<text x="55.8" y="45.6" font-size="8.5" fill="#7ba8cd" font-family="Liberation Sans" font-style="italic">Amer</text>
<text x="-1" y="52.4" font-size="8.5" fill="#7ba8cd" font-family="Liberation Sans" font-style="italic">nd</text>
<text x="34" y="52.4" font-size="8.5" fill="#7ba8cd" font-family="Liberation Sans" font-style="italic">p</text>
<text x="193" y="55" font-size="9.3" fill="#777" font-family="Liberation Sans" >'s-Hertogenbosch</text>
<text x="286" y="24.7" font-size="9.3" fill="#777" font-family="Liberation Sans" >Oss</text>
<text x="386" y="42" font-size="9.3" fill="#777" font-family="Liberation Sans" >Cuijk</text>
<text x="141.5" y="118" font-size="10" fill="#666" font-family="Liberation Sans" >Tilburg</text>
<text x="147.5" y="138.5" font-size="8.5" fill="#777" font-family="Liberation Sans" >Goirle</text>
<text x="-3" y="134" font-size="9" fill="#555" font-family="Liberation Sans" >aal</text>
<text x="253.8" y="173.8" font-size="10.3" fill="#555" font-family="Liberation Sans" >Eindhoven</text>
<text x="314" y="160.2" font-size="9.5" fill="#666" font-family="Liberation Sans" >Helmond</text>
<rect x="400" y="186" width="144" height="14" fill="#fff" fill-opacity="0.8"/>
<text x="403.5" y="196" font-size="8.8" fill="#333" font-family="Liberation Sans"><tspan fill="#2d6ca8">Leaflet</tspan> | Map data © <tspan fill="#2d6ca8">Land Registry</tspan></text>
<rect x="8.5" y="8.5" width="26" height="51" rx="4" fill="#fff" stroke="#c8c8c8" stroke-width="1"/>
<path d="M9,33.5 h25 v22 a4,4 0 0 1 -4,4 h-17 a4,4 0 0 1 -4,-4 Z" fill="#f4f4f4"/>
<rect x="9" y="33" width="25" height="1" fill="#d0d0d0"/>
<rect x="16" y="20.5" width="11" height="2.4" fill="#1c5187"/>
<rect x="20.3" y="16.2" width="2.4" height="11" fill="#1c5187"/>
<rect x="17" y="43.5" width="9" height="1.8" fill="#aaa"/>
</svg>
<!--CHART-->
<svg class="abs" style="left:0;top:0" width="1265" height="720" viewBox="0 0 1265 720">
<rect x="708.5" y="314.80" width="500" height="1" fill="#e6e6e6"/>
<rect x="708.5" y="365.82" width="500" height="1" fill="#e6e6e6"/>
<rect x="708.5" y="416.85" width="500" height="1" fill="#e6e6e6"/>
<rect x="708.5" y="467.88" width="500" height="1" fill="#e6e6e6"/>
<rect x="721.70" y="352.55" width="15.3" height="166.85" fill="#bb2759"/>
<rect x="754.36" y="417.86" width="15.3" height="101.54" fill="#bb2759"/>
<rect x="787.03" y="415.56" width="15.3" height="103.84" fill="#bb2759"/>
<rect x="819.69" y="409.95" width="15.3" height="109.45" fill="#bb2759"/>
<rect x="852.36" y="373.47" width="15.3" height="145.93" fill="#d5346f"/>
<rect x="885.02" y="377.81" width="15.3" height="141.59" fill="#bb2759"/>
<rect x="917.69" y="365.05" width="15.3" height="154.35" fill="#bb2759"/>
<rect x="950.35" y="381.89" width="15.3" height="137.51" fill="#bb2759"/>
<rect x="983.01" y="387.76" width="15.3" height="131.64" fill="#bb2759"/>
<rect x="1015.68" y="417.86" width="15.3" height="101.54" fill="#bb2759"/>
<rect x="1048.34" y="416.58" width="15.3" height="102.82" fill="#bb2759"/>
<rect x="1081.01" y="432.66" width="15.3" height="86.74" fill="#bb2759"/>
<rect x="1113.67" y="420.67" width="15.3" height="98.73" fill="#bb2759"/>
<rect x="1146.34" y="438.53" width="15.3" height="80.87" fill="#bb2759"/>
<rect x="1179.00" y="501.29" width="15.3" height="18.11" fill="#bb2759"/>
<rect x="708.5" y="518.90" width="500" height="1" fill="#ccd6eb"/>
<rect x="728.80" y="519.40" width="1" height="6.5" fill="#ccd6eb"/>
<text x="732.80" y="534.2" font-size="9.2" letter-spacing="0.25" fill="#666" font-family="Liberation Sans">30. Dec</text>
<rect x="793.80" y="519.40" width="1" height="6.5" fill="#ccd6eb"/>
<text x="797.80" y="534.2" font-size="9.2" letter-spacing="0.25" fill="#666" font-family="Liberation Sans">1. Jan</text>
<rect x="858.80" y="519.40" width="1" height="6.5" fill="#ccd6eb"/>
<text x="862.80" y="534.2" font-size="9.2" letter-spacing="0.25" fill="#666" font-family="Liberation Sans">3. Jan</text>
<rect x="924.50" y="519.40" width="1" height="6.5" fill="#ccd6eb"/>
<text x="928.50" y="534.2" font-size="9.2" letter-spacing="0.25" fill="#666" font-family="Liberation Sans">5. Jan</text>
<rect x="990.20" y="519.40" width="1" height="6.5" fill="#ccd6eb"/>
<text x="994.20" y="534.2" font-size="9.2" letter-spacing="0.25" fill="#666" font-family="Liberation Sans">7. Jan</text>
<rect x="1055.80" y="519.40" width="1" height="6.5" fill="#ccd6eb"/>
<text x="1059.80" y="534.2" font-size="9.2" letter-spacing="0.25" fill="#666" font-family="Liberation Sans">9. Jan</text>
<rect x="1121.20" y="519.40" width="1" height="6.5" fill="#ccd6eb"/>
<text x="1125.20" y="534.2" font-size="9.2" letter-spacing="0.25" fill="#666" font-family="Liberation Sans">11. Jan</text>
<rect x="1186.20" y="519.40" width="1" height="6.5" fill="#ccd6eb"/>
<text x="1190.20" y="534.2" font-size="9.2" letter-spacing="0.25" fill="#666" font-family="Liberation Sans">1...</text>
<text x="697.4" y="318.60" font-size="9.4" letter-spacing="0.55" fill="#666" text-anchor="end" font-family="Liberation Sans">800</text>
<text x="697.4" y="369.62" font-size="9.4" letter-spacing="0.55" fill="#666" text-anchor="end" font-family="Liberation Sans">600</text>
<text x="697.4" y="420.65" font-size="9.4" letter-spacing="0.55" fill="#666" text-anchor="end" font-family="Liberation Sans">400</text>
<text x="697.4" y="471.68" font-size="9.4" letter-spacing="0.55" fill="#666" text-anchor="end" font-family="Liberation Sans">200</text>
<text x="697.4" y="521.8" font-size="9.4" letter-spacing="0.55" fill="#666" text-anchor="end" font-family="Liberation Sans">0</text>
<path d="M798.4,331.6 H924.6 Q927.6,331.6 927.6,334.6 V366.2 Q927.6,369.2 924.6,369.2 H866 L860.8,374.3 L855.6,369.2 H798.4 Q795.4,369.2 795.4,366.2 V334.6 Q795.4,331.6 798.4,331.6 Z" fill="#000" fill-opacity="0.06" transform="translate(1,1)"/>
<path d="M798.4,331.6 H924.6 Q927.6,331.6 927.6,334.6 V366.2 Q927.6,369.2 924.6,369.2 H866 L860.8,374.3 L855.6,369.2 H798.4 Q795.4,369.2 795.4,366.2 V334.6 Q795.4,331.6 798.4,331.6 Z" fill="#f7f7f7" fill-opacity="0.9" stroke="#bb2759" stroke-width="1"/>
<text x="801.5" y="346" font-size="8.3" letter-spacing="0.25" fill="#333" font-family="Liberation Sans">Zondag, Jan 3, 2021</text>
<circle cx="805.3" cy="355.8" r="3" fill="#bb2759"/>
<text x="812" y="359" font-size="10.2" letter-spacing="0.38" fill="#333" font-family="Liberation Sans">Aantal meldingen: <tspan font-weight="bold">572</tspan></text>
</svg>
<!--ICONS-->
<svg class="abs" style="left:760px;top:655px" width="50" height="50" viewBox="760 655 50 50">
<circle cx="785.2" cy="670" r="9.6" fill="#e4b1cb"/>
<path d="M775.5,682 C778,683.5 781.5,684.2 785.2,684.2 C789,684.2 792.4,683.5 794.9,682 C799,682.3 802.2,686 802.2,690.2 L802.2,696.8 C802.2,698 801.2,699 800,699 L770.5,699 C769.3,699 768.3,698 768.3,696.8 L768.3,690.2 C768.3,686 771.5,682.3 775.5,682 Z" fill="#e4b1cb"/>
</svg>
<svg class="abs" style="left:1075px;top:655px" width="50" height="50" viewBox="1075 655 50 50">
<path d="M1091,663.5 C1094,661.8 1097.5,661 1100.8,661 C1104.1,661 1107.5,661.8 1110.5,663.5 L1110.5,673 C1110.5,678.6 1106.2,683 1100.8,683 C1095.4,683 1091,678.6 1091,673 Z" fill="#e4b1cb"/>
<path d="M1095,673.2 L1106.6,673.2 C1106.6,677 1104,680 1100.8,680 C1097.6,680 1095,677 1095,673.2 Z" fill="#fff"/>
<rect x="1100" y="664.2" width="1.8" height="6" fill="#fff"/>
<rect x="1097.9" y="666.3" width="6" height="1.8" fill="#fff"/>
<path d="M1092,684.2 L1100.8,692 L1109.6,684.2 C1114.5,684.6 1118,688.5 1118,693.5 L1118,697 C1118,698.2 1117,699 1115.8,699 L1086,699 C1084.8,699 1084,698.2 1084,697 L1084,693.5 C1084,688.5 1087.5,684.6 1092,684.2 Z" fill="#e4b1cb"/>
</svg>


<div id="scroll" class="abs"></div>
<div id="thumb" class="abs"></div>
<div class="abs" style="left:1268px;top:6.5px;width:0;height:0;border-left:3.5px solid transparent;border-right:3.5px solid transparent;border-bottom:4.5px solid #505050"></div>
<div class="abs" style="left:1268px;top:708.8px;width:0;height:0;border-left:3.5px solid transparent;border-right:3.5px solid transparent;border-top:4.5px solid #505050"></div>
</body></html>
